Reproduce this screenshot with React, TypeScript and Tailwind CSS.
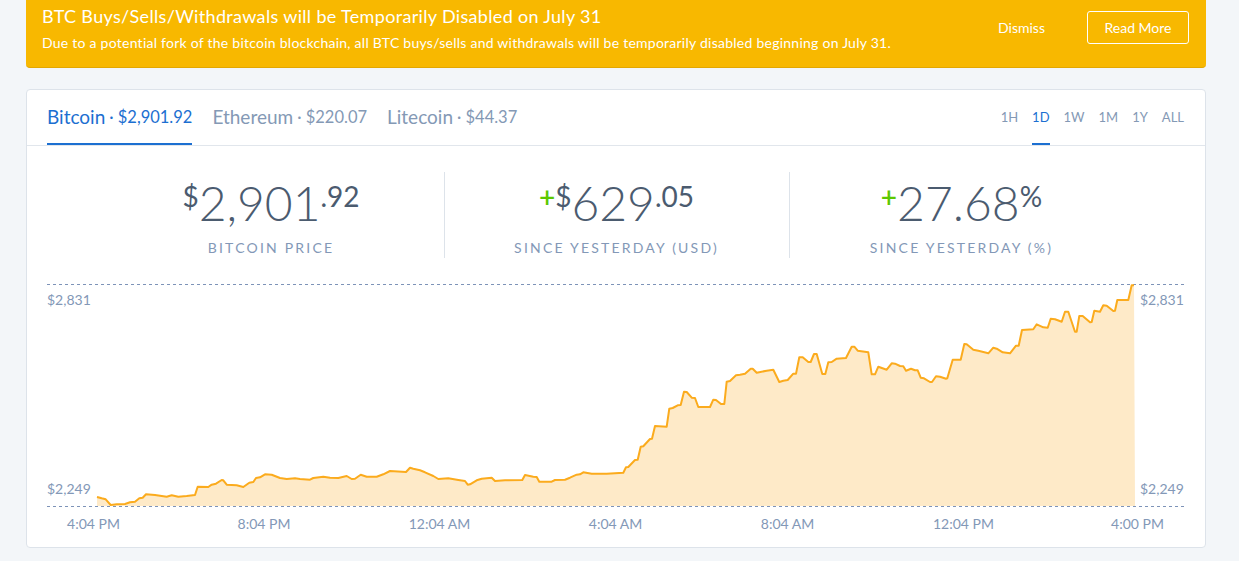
import React from "react"

const points: [number, number][] = [
  [97, 497], [101.7, 498.3], [105.7, 499.3], [110.7, 505], [116.7, 504.3], [125, 504], [130, 502.3], [135, 501.7],
  [139.3, 498.3], [142.7, 497.7], [146, 494.3], [155, 495], [166.7, 496.7], [171.7, 495.3], [178.3, 496.7], [186.7, 496],
  [195, 495], [197.7, 486.7], [208.3, 487], [211.7, 484.7], [216, 483.7], [221.7, 480], [223.3, 480.3], [226.7, 484.7],
  [236.7, 485.3], [243.3, 487], [249.3, 482.7], [253.3, 482], [256, 478], [260, 477.3], [265, 474.3], [271.7, 474.7],
  [280, 478], [286.7, 479], [295, 478.3], [300, 479], [310, 479.7], [313.3, 478], [323.3, 476.7], [330, 477.7],
  [338.3, 478], [346.7, 476], [351.7, 479], [355, 478.7], [360.7, 474.7], [366.7, 476.7], [376.7, 476.7], [383.3, 474.3],
  [390, 471], [406, 472], [410, 467.7], [413.3, 468.7], [420, 470.3], [425, 472.3], [433.3, 476], [438.3, 479],
  [448.3, 478.3], [458.3, 480], [465, 481], [467.7, 484.7], [470, 484.3], [476.7, 480.3], [481.7, 478.7], [491.7, 477.7],
  [495, 481], [505, 480.3], [522.3, 480], [525, 475], [533.3, 476.7], [536.7, 477], [539.3, 481.7], [551.7, 481.7],
  [555, 480], [565, 479.7], [570, 477.7], [576.7, 474.7], [580, 474.3], [583.3, 472.3], [591.7, 473.7], [606.7, 473.7],
  [623.3, 472.7], [626, 467.3], [628.3, 467], [635, 460], [637.7, 459.7], [640.7, 446.7], [643.3, 446.3], [650, 439],
  [652, 438.7], [655, 426], [666.7, 426.7], [669.3, 408.7], [672.7, 408], [677.7, 405.3], [680.7, 405], [684, 391.7],
  [686.7, 392], [691.7, 397.7], [695, 398], [698.3, 407], [710, 407], [713.3, 399.7], [716, 400], [721, 404],
  [724.3, 404], [726.7, 381.7], [730, 381], [736, 375.3], [740, 374.7], [745, 373.7], [750.7, 368.7], [752.7, 368.7],
  [756.7, 372.7], [766.7, 370.7], [773.3, 369.7], [779.3, 382], [783.3, 380.7], [787.7, 380], [793.3, 373.7], [796, 373.7],
  [799.3, 357.3], [802.7, 357.3], [808.3, 362], [810.7, 362], [814, 354], [816.7, 354], [822.3, 374], [825.3, 374],
  [828.3, 362.3], [831.7, 362], [836.7, 358.7], [846, 358], [851.7, 346.7], [854.3, 346.7], [857.7, 350.7], [868.3, 352.3],
  [871.7, 374.3], [875, 374.3], [878.3, 366.7], [886.7, 369.7], [891.7, 363.3], [895, 363.7], [900, 366], [903.3, 366.3],
  [906, 370.7], [911, 368.7], [915, 370.3], [917.7, 370.3], [920.7, 377.7], [924, 378.3], [930, 382], [932, 382],
  [936, 376.3], [940, 376.7], [946, 378.7], [947.3, 378.3], [952.7, 359.7], [960.7, 359.7], [964.3, 344], [966.7, 344.3],
  [973.3, 349.7], [978.3, 350.7], [988.3, 353.3], [993.3, 347.7], [996.7, 348.7], [1002.7, 352.3], [1010, 353.3], [1016, 345.7],
  [1018.7, 345.7], [1022, 330], [1033.3, 329.3], [1036.7, 324.3], [1043.3, 327.3], [1047.7, 327.7], [1050.7, 318.7], [1055, 319.3],
  [1061.7, 321.7], [1065, 311.7], [1068.3, 311.7], [1075, 331.7], [1076.7, 331.7], [1079.3, 316], [1082.7, 316], [1090, 322.3],
  [1091.7, 322], [1094.3, 310.7], [1100, 311.7], [1103.3, 305.3], [1106.7, 305.7], [1113.3, 311], [1115, 310.7], [1117.3, 300],
  [1128.3, 300], [1131.7, 285.3], [1134, 285.3],
]

const timeLabels = [
  { x: 93.5, label: "4:04 PM" },
  { x: 264, label: "8:04 PM" },
  { x: 439.5, label: "12:04 AM" },
  { x: 615.5, label: "4:04 AM" },
  { x: 787.5, label: "8:04 AM" },
  { x: 963.5, label: "12:04 PM" },
  { x: 1137.5, label: "4:00 PM" },
]

const tabs = [
  { name: "Bitcoin", price: "$2,901.92", active: true },
  { name: "Ethereum", price: "$220.07" },
  { name: "Litecoin", price: "$44.37" },
]

const ranges = ["1H", "1D", "1W", "1M", "1Y", "ALL"]

function PriceChart() {
  const line = points.map((p) => p.join(",")).join(" ")
  const area = `${line} 1135,506 97,506`
  const labelStyle = { fontFamily: "Lato, sans-serif", fontSize: 14, fill: "#8398b7" }

  return (
    <svg width={1138} height={270} viewBox="47 270 1138 270" className="block">
      <polygon points={area} fill="#feeac8" />
      <line x1={47} x2={1185} y1={284.5} y2={284.5} stroke="#7d93b8" strokeDasharray="3 3" />
      <line x1={47} x2={1185} y1={506.5} y2={506.5} stroke="#7d93b8" strokeDasharray="3 3" />
      <polyline points={line} fill="none" stroke="#fbab1d" strokeWidth={2} strokeLinejoin="round" />
      <text x={47} y={305} style={labelStyle}>$2,831</text>
      <text x={47} y={494} style={labelStyle}>$2,249</text>
      <text x={1140} y={305} style={labelStyle}>$2,831</text>
      <text x={1140} y={494} style={labelStyle}>$2,249</text>
      {timeLabels.map((t) => (
        <text key={t.label} x={t.x} y={529} textAnchor="middle" style={labelStyle}>
          {t.label}
        </text>
      ))}
    </svg>
  )
}

function Plus() {
  return <span className="mt-[3px] text-[28px] leading-[28px] font-semibold text-[#5cc800]">+</span>
}

function Sup({ children }: { children: React.ReactNode }) {
  return <span className="mt-[3px] text-[28px] leading-[28px] font-normal">{children}</span>
}

function Stat({ children, label, divider }: { children: React.ReactNode; label: string; divider?: boolean }) {
  return (
    <div className={`flex h-[86px] w-[345px] flex-col items-center pt-[7px] ${divider ? "border-l border-[#dde3ea]" : ""}`}>
      <div className="flex items-start font-light text-[#4b5b6f]">{children}</div>
      <div className="mt-[11px] text-[14px] leading-[20px] tracking-[2.2px] text-[#8398b7]">{label}</div>
    </div>
  )
}

export default function App() {
  return (
    <div className="min-h-[561px] w-full bg-[#f3f6f9] font-[Lato,sans-serif]">
      <div className="ml-[26px] w-[1180px]">
        <div className="flex h-[68px] items-start justify-between rounded-b-[4px] border-b border-[#e3a700] bg-[#f8b800] pl-4 pr-[17px] text-white">
          <div className="pt-[4px]">
            <div className="text-[18px] leading-[24px] tracking-[0.33px]">BTC Buys/Sells/Withdrawals will be Temporarily Disabled on July 31</div>
            <div className="mt-[6px] text-[14px] leading-[18px] tracking-[0.25px]">
              Due to a potential fork of the bitcoin blockchain, all BTC buys/sells and withdrawals will be temporarily disabled beginning on July 31.
            </div>
          </div>
          <div className="mt-[11px] flex items-center gap-[42px]">
            <span className="text-[14px]">Dismiss</span>
            <button className="h-[33px] w-[102px] rounded-[3px] border border-white text-[14px] text-white">Read More</button>
          </div>
        </div>

        <div className="mt-[21px] rounded-[4px] border border-[#dde3ea] bg-white">
          <div className="flex h-[56px] items-stretch justify-between border-b border-[#e1e6ec] pl-5 pr-[21px]">
            <div className="flex gap-5">
              {tabs.map((t) => (
                <div
                  key={t.name}
                  className={`flex items-center border-b-2 pt-[2px] ${t.active ? "border-[#1c6fd1] text-[#1c6fd1]" : "border-transparent text-[#8499b5]"}`}
                >
                  <span className="text-[19px]">{t.name}</span>
                  <span className="ml-[4px] text-[16.5px]">· {t.price}</span>
                </div>
              ))}
            </div>
            <div className="flex gap-[14px]">
              {ranges.map((r) => (
                <div
                  key={r}
                  className={`flex items-center border-b-2 pt-[2px] text-[13px] ${r === "1D" ? "border-[#1c6fd1] text-[#1c6fd1]" : "border-transparent text-[#8499b5]"}`}
                >
                  {r}
                </div>
              ))}
            </div>
          </div>

          <div className="mt-[26px] flex justify-center">
            <Stat label="BITCOIN PRICE">
              <Sup>$</Sup>
              <span className="text-[48px] leading-[48px]">2,901</span>
              <Sup>.92</Sup>
            </Stat>
            <Stat label="SINCE YESTERDAY (USD)" divider>
              <Plus />
              <Sup>$</Sup>
              <span className="text-[48px] leading-[48px]">629</span>
              <Sup>.05</Sup>
            </Stat>
            <Stat label="SINCE YESTERDAY (%)" divider>
              <Plus />
              <span className="text-[48px] leading-[48px]">27.68</span>
              <Sup>%</Sup>
            </Stat>
          </div>

          <div className="mt-[12px] px-5 pb-[7px]">
            <PriceChart />
          </div>
        </div>
      </div>
    </div>
  )
}
